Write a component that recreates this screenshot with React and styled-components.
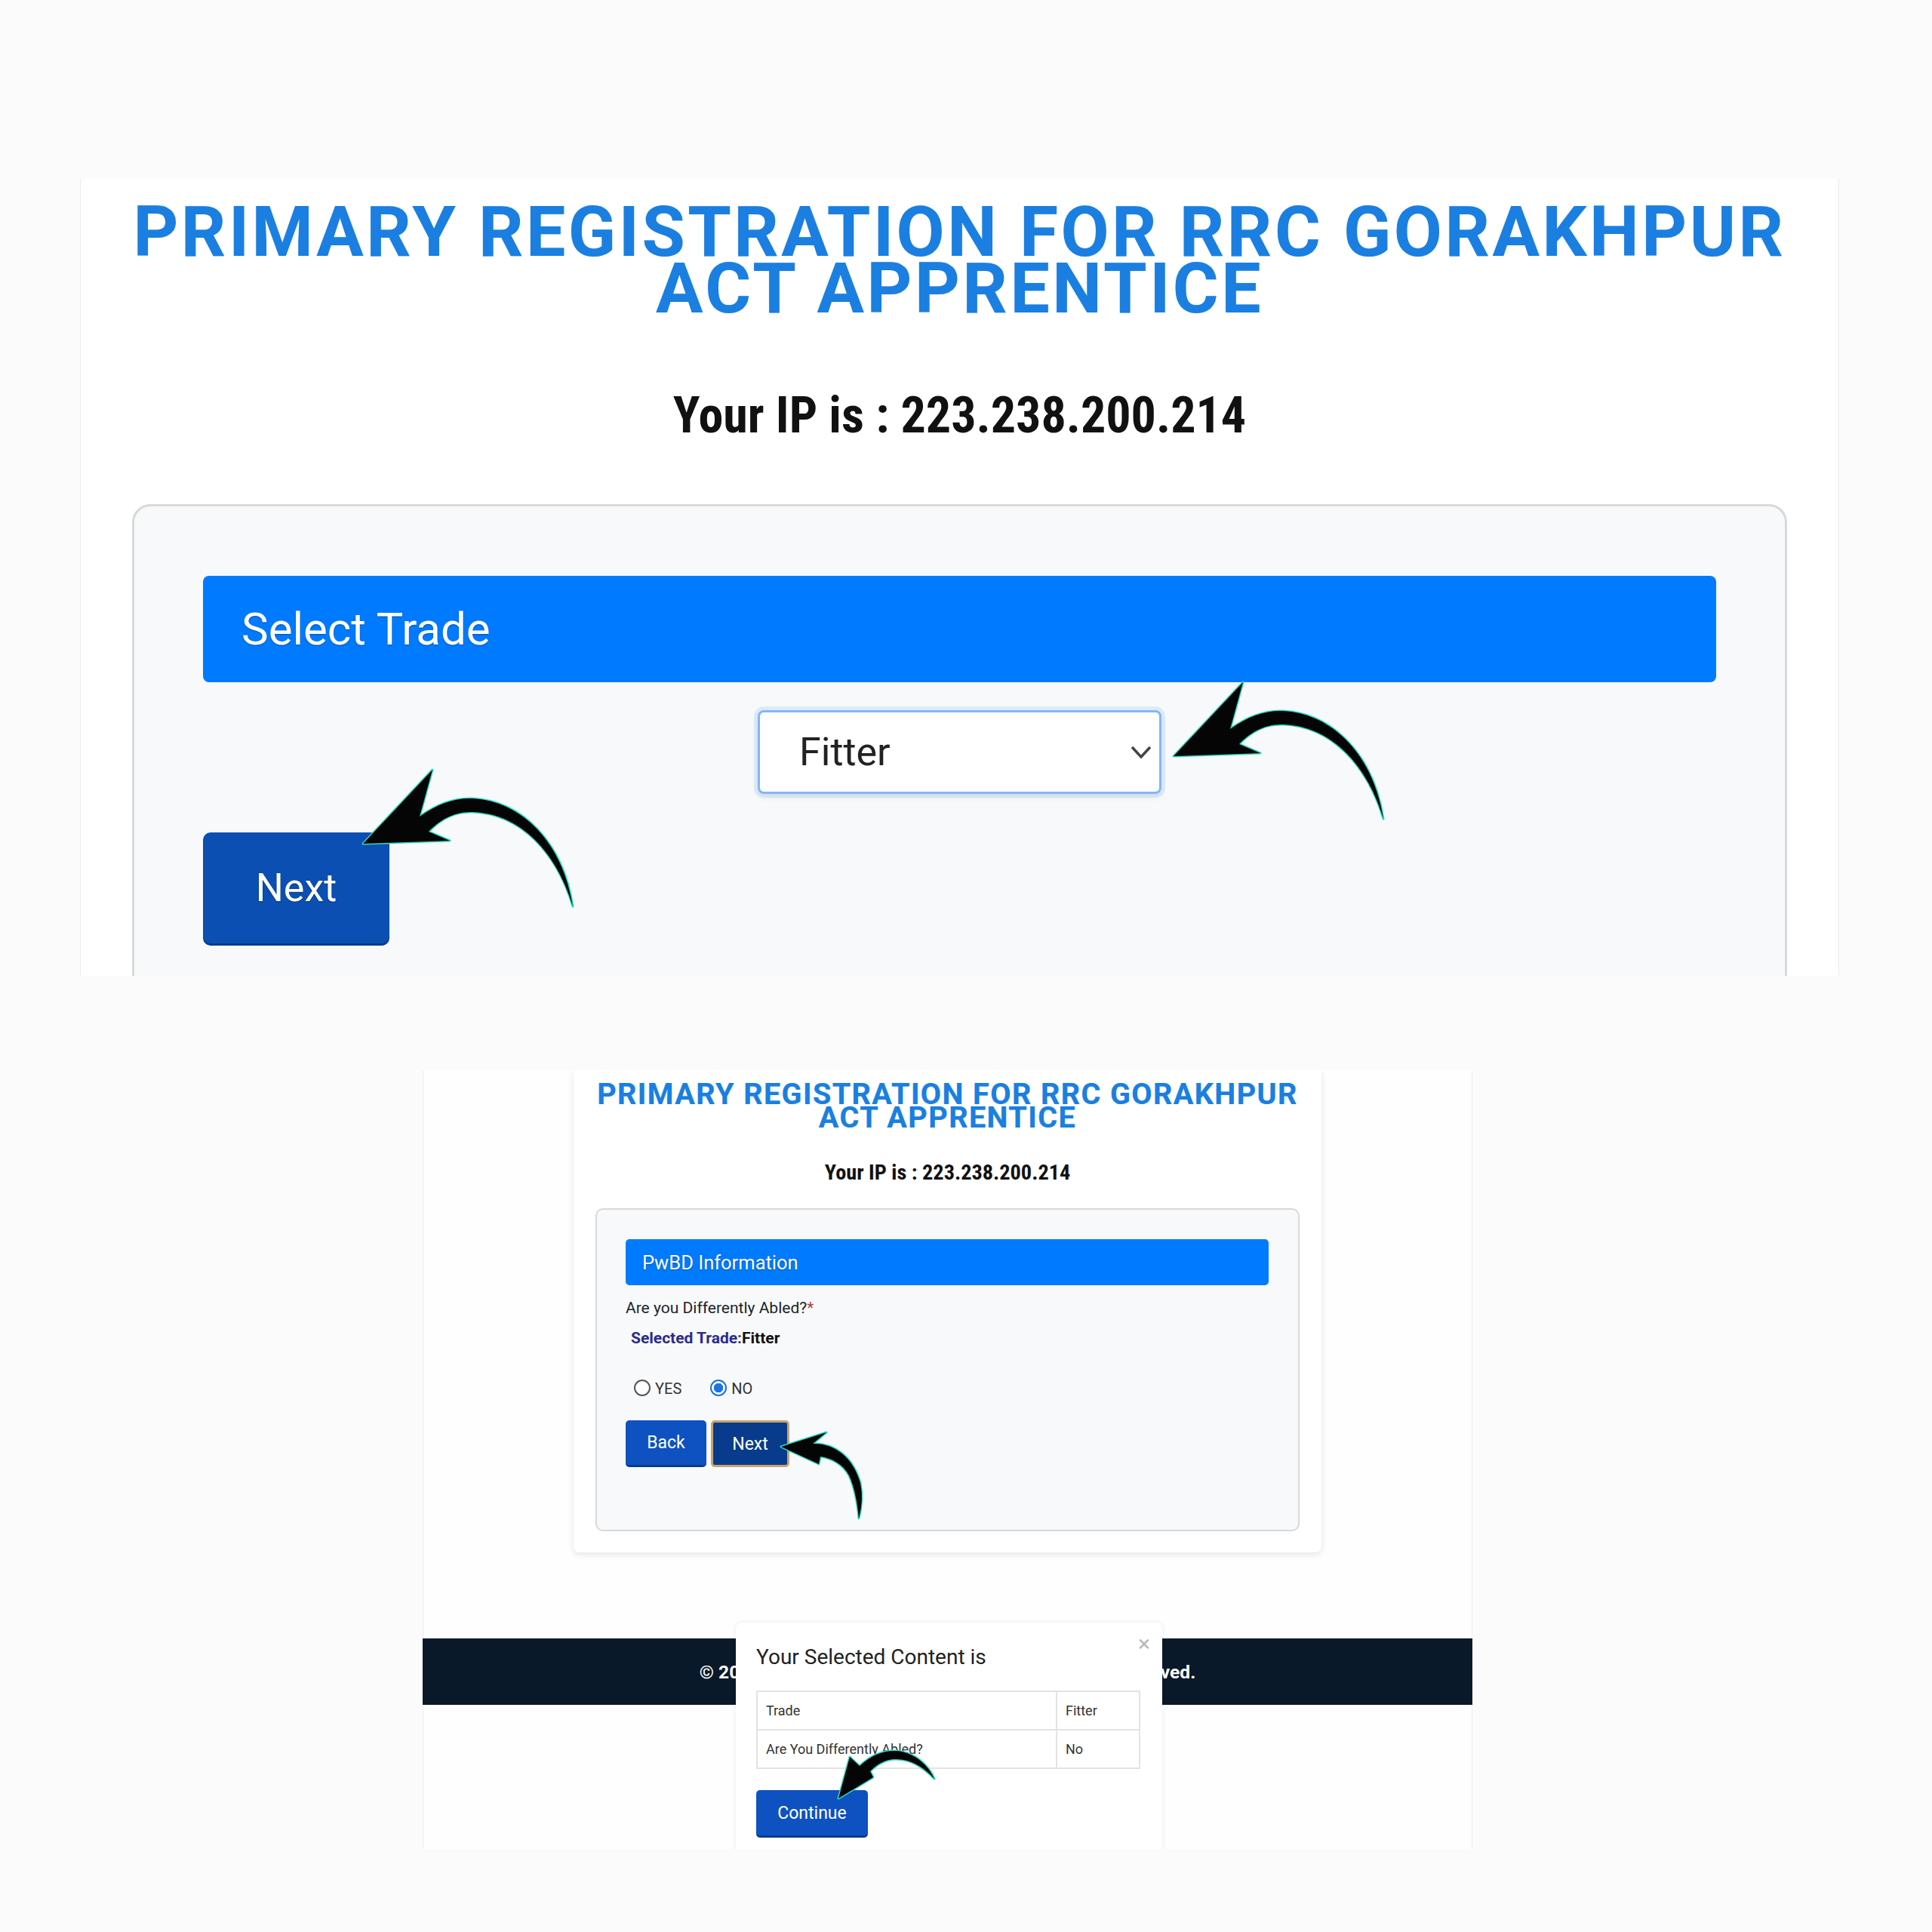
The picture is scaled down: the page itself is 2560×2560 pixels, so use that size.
import React from 'react'
import styled, { createGlobalStyle } from 'styled-components'

const GlobalStyle = createGlobalStyle`
  html, body {
    margin: 0;
    padding: 0;
    background: #fbfbfb;
  }
  body {
    font-family: Roboto, "Liberation Sans", Arial, sans-serif;
    color: #212529;
  }
  * {
    box-sizing: border-box;
  }
`

const Page = styled.div`
  width: 2560px;
  height: 2560px;
  padding-top: 237px;
  display: flex;
  flex-direction: column;
  overflow: hidden;
`

const Shot = styled.section`
  position: relative;
  flex-shrink: 0;
  overflow: hidden;
  margin-left: ${p => p.$left}px;
  margin-top: ${p => p.$gap || 0}px;
  width: ${p => p.$width}px;
  height: ${p => p.$height}px;
  padding: ${p => p.$pad || '0'};
  background: ${p => p.$bg};
  box-shadow: inset 1px 0 0 #ececec, inset -1px 0 0 #ececec;
  display: flex;
  flex-direction: column;
`

const Card = styled.div`
  width: 991px;
  margin: 0 auto;
  padding: 16px 29px 28px;
  background: #fff;
  border-radius: 0 0 8px 8px;
  box-shadow: 0 3px 10px rgba(0, 0, 0, 0.1);
  display: flex;
  flex-direction: column;
`

const Title = styled.h1`
  margin: 0;
  text-align: center;
  white-space: nowrap;
  font-family: Roboto, sans-serif;
  font-weight: 700;
  color: #1a7fe0;
  font-size: ${p => p.$size}px;
  line-height: ${p => p.$line}px;
  letter-spacing: ${p => p.$spacing}px;
  text-shadow: 0 0 1px rgba(26, 127, 224, 0.45);
`

const IpLine = styled.p`
  margin: ${p => p.$gap}px 0 0;
  text-align: center;
  font-family: "Liberation Sans Narrow", "Roboto Condensed", Roboto, sans-serif;
  font-weight: 700;
  color: #111;
  font-size: ${p => p.$size}px;
  line-height: ${p => p.$line}px;
`

const FormBox = styled.div`
  margin-top: ${p => p.$gap}px;
  background: #f8f9fa;
  border: ${p => p.$border}px solid #d9d9d9;
  border-radius: ${p => p.$radius}px;
  padding: ${p => p.$pad};
  display: flex;
  flex-direction: column;
  align-items: flex-start;
`

const Bar = styled.div`
  align-self: stretch;
  display: flex;
  align-items: center;
  height: ${p => p.$height}px;
  padding-left: ${p => p.$indent}px;
  border-radius: ${p => p.$radius}px;
  background: #007bff;
  color: #fff;
  font-size: ${p => p.$size}px;
  text-shadow: 0 1px 2px rgba(0, 0, 0, 0.35);
`

const SelectWrap = styled.div`
  display: grid;
  align-self: center;
  width: 535px;
  height: 111px;
  margin-top: 37px;
`

const Select = styled.select`
  grid-area: 1 / 1;
  appearance: none;
  width: 100%;
  height: 100%;
  padding-left: 52px;
  border: 3px solid #86b7f0;
  border-radius: 8px;
  background: #fff;
  box-shadow: 0 0 0 5px rgba(128, 189, 255, 0.22), 0 4px 10px rgba(0, 0, 0, 0.08);
  font-family: Roboto, sans-serif;
  font-size: 52px;
  color: #222;
  outline: none;
`

const Chevron = styled.svg`
  grid-area: 1 / 1;
  justify-self: end;
  align-self: center;
  margin-right: 13px;
  pointer-events: none;
`

const BigButton = styled.button`
  margin-top: 51px;
  width: 247px;
  height: 147px;
  border: none;
  border-radius: 10px;
  background: #0b4fb3;
  box-shadow: 0 3px 0 #0a3d8a;
  color: #fff;
  font-family: Roboto, sans-serif;
  font-size: 52px;
  text-shadow: 0 1px 2px rgba(0, 0, 0, 0.3);
`

const Question = styled.div`
  margin-top: 15px;
  font-size: 21px;
  line-height: 31.5px;
  color: #212529;
`

const Star = styled.span`
  color: #c0392b;
`

const TradeLine = styled.div`
  margin-top: 8px;
  padding-left: 7px;
  font-size: 21px;
  line-height: 31.5px;
  font-weight: 700;
  color: #111;
`

const TradeLabel = styled.span`
  color: #2b2b8f;
`

const RadioRow = styled.div`
  margin-top: 39px;
  padding-left: 11px;
  display: flex;
  align-items: flex-end;
  gap: 38px;
`

const RadioLabel = styled.label`
  display: flex;
  align-items: flex-end;
  gap: 6px;
  font-size: 20px;
  line-height: 20px;
  color: #333;
`

const Radio = styled.input`
  appearance: none;
  margin: 0;
  width: 22px;
  height: 22px;
  border-radius: 50%;
  border: 2px solid #555;
  background: #fff;

  &:checked {
    border-color: #1b6fe0;
    background: radial-gradient(circle, #1b74e4 0 6px, #fff 6.5px);
  }
`

const ButtonRow = styled.div`
  margin-top: 32px;
  display: flex;
  gap: 6px;
`

const SmallButton = styled.button`
  width: ${p => p.$width}px;
  height: ${p => p.$height || 62}px;
  border: ${p => (p.$focus ? '3px solid #c8a46e' : 'none')};
  border-bottom: ${p => (p.$focus ? '3px solid #c8a46e' : '3px solid #0a3a8f')};
  border-radius: 5px;
  background: ${p => (p.$focus ? '#083b8c' : '#0d52c0')};
  color: #fff;
  font-family: Roboto, sans-serif;
  font-size: 23px;
  margin-top: ${p => p.$gap || 0}px;
`

const Footer = styled.footer`
  margin-top: 114px;
  height: 88px;
  flex-shrink: 0;
  display: flex;
  align-items: center;
  justify-content: center;
  background: #0a1929;
  color: #fff;
  font-size: 24.5px;
  font-weight: 700;
  white-space: nowrap;
`

const Modal = styled.div`
  position: absolute;
  left: 415px;
  top: 732px;
  width: 565px;
  height: 330px;
  z-index: 2;
  padding: 29px 28px 0 27px;
  background: #fff;
  border-radius: 8px;
  box-shadow: 0 0 6px rgba(0, 0, 0, 0.08);
  display: flex;
  flex-direction: column;
  align-items: flex-start;
`

const ModalHead = styled.div`
  align-self: stretch;
  display: flex;
  justify-content: space-between;
`

const ModalTitle = styled.h5`
  margin: 0;
  font-size: 28px;
  line-height: 34px;
  font-weight: 400;
  color: #222;
`

const Close = styled.span`
  margin: -16px -12px 0 0;
  font-size: 30px;
  line-height: 30px;
  color: #b8b8b8;
`

const Table = styled.table`
  margin-top: 27px;
  width: 509px;
  border-collapse: collapse;
`

const Cell = styled.td`
  height: 51px;
  padding: 0 11px;
  border: 2px solid #e3e3e3;
  font-size: 18px;
  color: #333;
  width: ${p => (p.$wide ? '397px' : 'auto')};
`

const Pointer = styled.svg`
  position: absolute;
  left: ${p => p.$x}px;
  top: ${p => p.$y}px;
  overflow: visible;
  z-index: 5;
`

const BIG_ARROW =
  'M5,102 L97,4 L80,66 C105,48 128,41 150,42 C215,45 270,100 283,185 C262,115 215,62 150,60 C125,59 105,72 92,86 L120,98 Z'
const SIDE_ARROW =
  'M5,27 L65,8 L47,23 C75,22 100,40 110,75 C114,95 111,110 108,122 C106,100 102,80 95,65 C87,50 72,42 57,40 L55,50 Z'
const DOWN_ARROW =
  'M11,73 L26,18 L39,30 C55,15 72,9 87,10 C110,11 130,28 138,47 C125,33 108,21 87,21 C72,21 62,28 53,37 L57,45 Z'

const Arrow = ({ x, y, w, h, d }) => (
  <Pointer $x={x} $y={y} width={w} height={h} viewBox={`0 0 ${w} ${h}`}>
    <path
      d={d}
      fill="#050505"
      stroke="#2fd9c0"
      strokeWidth="3"
      strokeLinejoin="round"
      paintOrder="stroke"
    />
  </Pointer>
)

export default function App() {
  return (
    <>
      <GlobalStyle />
      <Page>
        <Shot $left={106} $width={2331} $height={1056} $bg="#fff" $pad="33px 69px 0">
          <Title $size={93} $line={75} $spacing={3.5}>
            PRIMARY REGISTRATION FOR RRC GORAKHPUR
            <br />
            ACT APPRENTICE
          </Title>
          <IpLine $gap={92} $size={66} $line={78}>
            Your IP is : 223.238.200.214
          </IpLine>
          <FormBox $gap={78} $border={3} $radius={24} $pad="92px 91px 200px 91px">
            <Bar $height={141} $indent={51} $radius={8} $size={60}>
              Select Trade
            </Bar>
            <SelectWrap>
              <Select defaultValue="Fitter">
                <option>Fitter</option>
                <option>Electrician</option>
                <option>Welder</option>
              </Select>
              <Chevron width="28" height="18" viewBox="0 0 28 18">
                <polyline points="2,2 14,15 26,2" fill="none" stroke="#444" strokeWidth="3.5" />
              </Chevron>
            </SelectWrap>
            <BigButton>Next</BigButton>
          </FormBox>
          <Arrow x={1444} y={663} w={290} h={190} d={BIG_ARROW} />
          <Arrow x={370} y={779} w={290} h={190} d={BIG_ARROW} />
        </Shot>

        <Shot $left={560} $width={1391} $height={1032} $bg="#fefefe" $gap={125}>
          <Card>
            <Title $size={39.6} $line={31} $spacing={1.4}>
              PRIMARY REGISTRATION FOR RRC GORAKHPUR
              <br />
              ACT APPRENTICE
            </Title>
            <IpLine $gap={41} $size={28.3} $line={33}>
              Your IP is : 223.238.200.214
            </IpLine>
            <FormBox $gap={31} $border={2} $radius={10} $pad="39px 39px 83px 38px">
              <Bar $height={61} $indent={22} $radius={5} $size={25.5}>
                PwBD Information
              </Bar>
              <Question>
                Are you Differently Abled?<Star>*</Star>
              </Question>
              <TradeLine>
                <TradeLabel>Selected Trade:</TradeLabel>Fitter
              </TradeLine>
              <RadioRow>
                <RadioLabel>
                  <Radio type="radio" name="pwbd" value="yes" />
                  YES
                </RadioLabel>
                <RadioLabel>
                  <Radio type="radio" name="pwbd" value="no" defaultChecked />
                  NO
                </RadioLabel>
              </RadioRow>
              <ButtonRow>
                <SmallButton $width={107}>Back</SmallButton>
                <SmallButton $width={104} $focus>
                  Next
                </SmallButton>
              </ButtonRow>
            </FormBox>
          </Card>

          <Footer>© 2023 Railway Recruitment Cell, NER. All Rights Reserved.</Footer>

          <Modal>
            <ModalHead>
              <ModalTitle>Your Selected Content is</ModalTitle>
              <Close>×</Close>
            </ModalHead>
            <Table>
              <tbody>
                <tr>
                  <Cell $wide>Trade</Cell>
                  <Cell>Fitter</Cell>
                </tr>
                <tr>
                  <Cell $wide>Are You Differently Abled?</Cell>
                  <Cell>No</Cell>
                </tr>
              </tbody>
            </Table>
            <SmallButton $width={148} $height={63} $gap={28}>
              Continue
            </SmallButton>
          </Modal>

          <Arrow x={470} y={472} w={120} h={130} d={SIDE_ARROW} />
          <Arrow x={540} y={892} w={145} h={80} d={DOWN_ARROW} />
        </Shot>
      </Page>
    </>
  )
}
